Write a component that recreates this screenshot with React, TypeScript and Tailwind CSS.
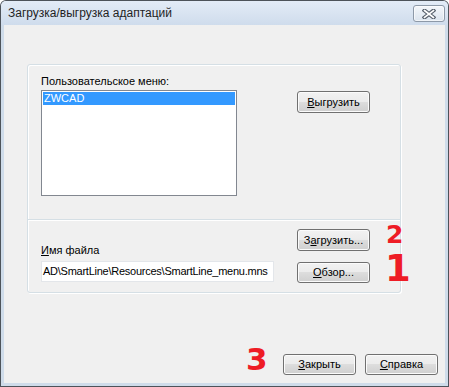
import React from "react";

function Btn({ children, className = "" }: { children: React.ReactNode; className?: string }) {
  return (
    <div
      className={`w-[73px] rounded-[3px] border border-[#707070] bg-[linear-gradient(#f2f2f2_0%,#ebebeb_50%,#dddddd_50%,#cfcfcf_100%)] shadow-[inset_0_0_0_1px_#fbfbfb] flex items-center justify-center text-[11px] leading-[13px] text-black ${className}`}
    >
      {children}
    </div>
  );
}

export default function App() {
  return (
    <div className="relative w-[449px] h-[387px] bg-[#4d535a] p-px rounded-t-[6px] font-['Liberation_Sans',Arial,sans-serif]">
      <div className="h-full flex flex-col bg-[#cfdcea] rounded-t-[5px] overflow-hidden">
        <div className="h-[24px] shrink-0 bg-[linear-gradient(#e3ecf7,#cfdcec)] flex items-center pl-[7px] relative">
          <span className="text-[12px] text-[#1f1f1f] leading-none">Загрузка/выгрузка адаптаций</span>
          <div className="absolute left-[412px] top-[4px] w-[32px] h-[17px] rounded-[3px] border border-[#8d99a8] bg-[linear-gradient(#f4f7fb,#dbe4ee)] shadow-[inset_0_0_0_1px_#ffffff99] flex items-center justify-center">
            <svg width="14" height="10" viewBox="0 0 14 10">
              <path d="M2.5 1.5 L11.5 8.5 M11.5 1.5 L2.5 8.5" stroke="#59626e" strokeWidth="4" strokeLinecap="square" fill="none" />
              <path d="M2.5 1.5 L11.5 8.5 M11.5 1.5 L2.5 8.5" stroke="#ffffff" strokeWidth="1.6" strokeLinecap="square" fill="none" />
            </svg>
          </div>
        </div>
        <div className="flex-1 mx-[3px] mb-[3px] bg-[#f0f0f0] flex flex-col text-[11px] leading-[13px] text-black">
          <div className="mt-[39px] ml-[23px] w-[374px] h-[229px] border border-[#d5dfe5] rounded-[3px] shadow-[1px_1px_0_#ffffff,inset_1px_1px_0_#ffffff] flex flex-col">
            <div className="h-[154px] pt-[10px] pl-[13px] flex">
              <div className="flex flex-col w-[196px]">
                <span>Пользовательское меню:</span>
                <div className="mt-[2px] h-[106px] border border-[#828790] bg-white p-px">
                  <div className="h-[13px] bg-[#3399ff] text-white pl-[1px] leading-[13px]">ZWCAD</div>
                </div>
              </div>
              <Btn className="h-[22px] ml-[60px] mt-[16px]">
                <span><span className="underline">В</span>ыгрузить</span>
              </Btn>
            </div>
            <div className="h-px bg-[#d5dfe5] shadow-[0_1px_0_#ffffff]" />
            <div className="h-[72px] pt-[9px] pl-[13px] flex">
              <div className="flex flex-col w-[233px]">
                <span className="mt-[15px]"><span className="underline">И</span>мя файла</span>
                <div className="mt-[4px] h-[21px] border border-[#e3e6ea] bg-white overflow-hidden whitespace-nowrap flex items-center pl-px tracking-[-0.25px]">
                  AD\SmartLine\Resources\SmartLine_menu.mns
                </div>
              </div>
              <div className="flex flex-col ml-[23px]">
                <Btn className="h-[22px]">
                  <span>З<span className="underline">а</span>грузить...</span>
                </Btn>
                <Btn className="h-[21px] mt-[11px]">
                  <span><span className="underline">О</span>бзор...</span>
                </Btn>
              </div>
            </div>
          </div>
          <div className="flex-1" />
          <div className="flex justify-end gap-[9px] pr-[7px] pb-[8px]">
            <Btn className="h-[21px] w-[72px]">
              <span><span className="underline">З</span>акрыть</span>
            </Btn>
            <Btn className="h-[21px]">
              <span><span className="underline">С</span>правка</span>
            </Btn>
          </div>
        </div>
      </div>
      <span className="absolute left-[386px] top-[225px] text-[25px] leading-[0.8] font-bold text-[#ee1c25] font-['DejaVu_Sans',sans-serif]">2</span>
      <span className="absolute left-[385px] top-[254px] text-[37px] leading-[0.8] font-bold text-[#ee1c25] font-['DejaVu_Sans',sans-serif]">1</span>
      <span className="absolute left-[246px] top-[347px] text-[31px] leading-[0.8] font-bold text-[#ee1c25] font-['DejaVu_Sans',sans-serif]">3</span>
    </div>
  );
}
